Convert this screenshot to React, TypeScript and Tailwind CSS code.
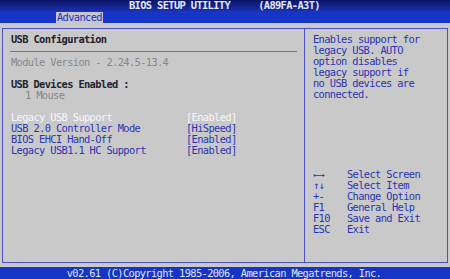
const rows = [
  { label: 'Legacy USB Support', value: '[Enabled]', active: true },
  { label: 'USB 2.0 Controller Mode', value: '[HiSpeed]' },
  { label: 'BIOS EHCI Hand-Off', value: '[Enabled]' },
  { label: 'Legacy USB1.1 HC Support', value: '[Enabled]' },
]

const help = [
  'Enables support for',
  'legacy USB. AUTO',
  'option disables',
  'legacy support if',
  'no USB devices are',
  'connected.',
]

const keys = [
  ['←→', 'Select Screen'],
  ['↑↓', 'Select Item'],
  ['+-', 'Change Option'],
  ['F1', 'General Help'],
  ['F10', 'Save and Exit'],
  ['ESC', 'Exit'],
]

export default function App() {
  return (
    <div className="flex h-[279px] w-[450px] flex-col overflow-hidden bg-[#c9c9ca] font-['DejaVu_Sans_Mono','Liberation_Mono',monospace] text-[10.4px] leading-[11px] tracking-[-0.64px]">
      {/* title */}
      <div className="flex h-[11px] items-center bg-gradient-to-b from-[#0a1466] to-[#1a2eae] pl-[129px] font-bold whitespace-pre text-[#e4eaff]">
        BIOS SETUP UTILITY     (A89FA-A3T)
      </div>

      {/* menu bar */}
      <div className="flex h-[12px] items-end bg-[#1634c6]">
        <div className="ml-[56px] h-[11px] bg-[#c4c6d2] px-[1px] text-[#2030b8]">Advanced</div>
      </div>

      {/* main */}
      <div className="flex flex-1 px-[2px] pt-[5px] pb-[4px]">
        <div className="flex flex-1 border border-[#4b50c4]">
          <div className="flex w-[302px] flex-col border-r border-[#4b50c4] pt-[5px]">
            <div className="pl-[8px] font-bold text-[#22232e]">USB Configuration</div>
            <div className="mt-[6px] mr-[7px] ml-[7px] h-px bg-[#6c70c8]" />
            <div className="mt-[5px] pl-[8px] text-[#85868e]">Module Version - 2.24.5-13.4</div>
            <div className="h-[11px]" />
            <div className="pl-[8px] font-bold text-[#22232e]">USB Devices Enabled :</div>
            <div className="pl-[22px] text-[#85868e]">1 Mouse</div>
            <div className="h-[11px]" />
            {rows.map((r) => (
              <div
                key={r.label}
                className={`grid grid-cols-[175px_1fr] pl-[8px] ${r.active ? 'text-[#f6f6fa]' : 'text-[#2a34b4]'}`}
              >
                <span>{r.label}</span>
                <span>{r.value}</span>
              </div>
            ))}
          </div>

          <div className="flex flex-1 flex-col justify-between pt-[5px] pb-[27px] pl-[8px] text-[#2a34b4]">
            <div>
              {help.map((l) => (
                <div key={l}>{l}</div>
              ))}
            </div>
            <div>
              {keys.map(([k, d]) => (
                <div key={k} className="grid grid-cols-[34px_1fr]">
                  <span>{k}</span>
                  <span>{d}</span>
                </div>
              ))}
            </div>
          </div>
        </div>
      </div>

      {/* footer */}
      <div className="flex h-[12px] items-center justify-center bg-[#1634c8] pr-[2px] text-[#dfe6ff]">
        v02.61 (C)Copyright 1985-2006, American Megatrends, Inc.
      </div>
    </div>
  )
}
